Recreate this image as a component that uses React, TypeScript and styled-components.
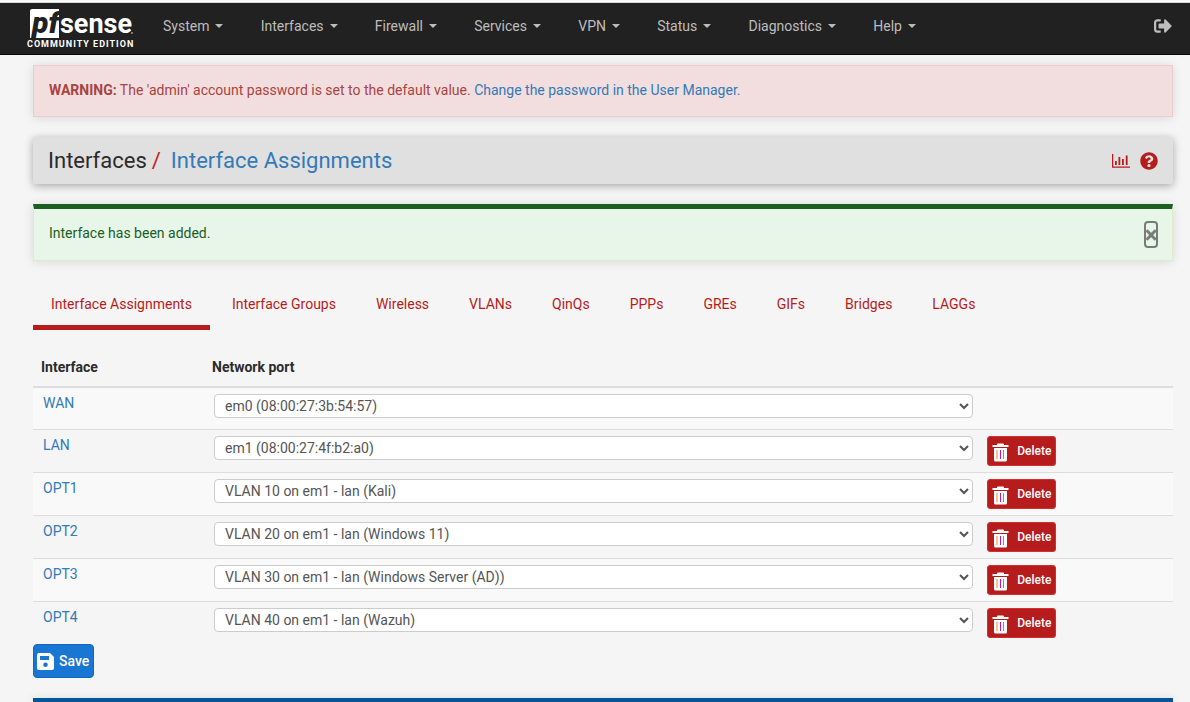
import React from "react";
import styled, { createGlobalStyle } from "styled-components";
import { FaQuestionCircle, FaSignOutAlt } from "react-icons/fa";

const GlobalStyle = createGlobalStyle`
  *, *::before, *::after { box-sizing: border-box; }
  body {
    margin: 0;
    background: #f5f5f5;
    color: #2b2b2b;
    font: 14px/20px Roboto, "Liberation Sans", sans-serif;
    overflow-x: hidden;
  }
  a { color: #337ab7; text-decoration: none; }
`;

const Page = styled.div`
  border-top: 2px solid #fafafa;
`;

const Navbar = styled.header`
  display: flex;
  align-items: center;
  height: 53px;
  padding: 0 18px 6px 27px;
  background: #212121;
  border-top: 1px solid #d8d8d8;
  border-bottom: 1px solid #080808;
`;

const Brand = styled.a`
  display: block;
  flex: none;
  width: 108px;
  height: 40px;
  margin-top: 5px;
  svg { display: block; overflow: visible; }
`;

const Menu = styled.nav`
  display: flex;
  flex: 1;
  justify-content: space-between;
  max-width: 781px;
  padding-left: 28px;
`;

const MenuItem = styled.button`
  display: flex;
  align-items: center;
  gap: 6px;
  padding: 0;
  border: 0;
  background: none;
  color: #bdbdbd;
  font: inherit;
  &::after {
    content: "";
    border: 4px solid transparent;
    border-top-color: currentColor;
    border-bottom: 0;
  }
`;

const Logout = styled.a`
  display: flex;
  margin-left: auto;
  color: #bdbdbd;
`;

const Content = styled.main`
  padding: 10px 17px 0 33px;
`;

const Alert = styled.div<{ $kind: "danger" | "success" }>`
  display: flex;
  justify-content: space-between;
  padding: 14px 14px 16px 15px;
  margin-bottom: 20px;
  box-shadow: 0 1px 10px rgba(0, 0, 0, 0.12);
  ${({ $kind }) =>
    $kind === "danger"
      ? "border: 1px solid #ebccd1; background: #f2dede; color: #a94442;"
      : "border: 1px solid #dcedc8; border-top: 5px solid #1b5e20; background: #e8f5e9; color: #1b5e20; padding-bottom: 17px;"}
`;

const CloseButton = styled.button`
  display: flex;
  align-items: center;
  justify-content: center;
  width: 14px;
  height: 27px;
  margin: -2px 0 -5px;
  padding: 0;
  border: 2px solid #757d76;
  border-radius: 4px;
  background: transparent;
  color: #757d76;
  font: bold 24px/24px Roboto, sans-serif;
`;

const TitleBar = styled.div`
  display: flex;
  align-items: center;
  justify-content: space-between;
  height: 47px;
  padding: 0 15px;
  margin-bottom: 20px;
  border-radius: 2px;
  background: #e0e0e0;
  box-shadow: 0 2px 8px rgba(0, 0, 0, 0.32);
`;

const Title = styled.h1`
  display: flex;
  gap: 5px;
  margin: 0;
  font-size: 22px;
  line-height: 28px;
  font-weight: 400;
  span { color: #c61a1a; }
  a { margin-left: 5px; }
`;

const TitleActions = styled.div`
  display: flex;
  align-items: center;
  gap: 10px;
  a { display: flex; color: #b71c1c; }
`;

const Tabs = styled.nav`
  display: flex;
  gap: 4px;
  margin-bottom: 20px;
`;

const Tab = styled.a<{ $active?: boolean }>`
  padding: 13px 18px 11px;
  color: #b71c1c;
  border-bottom: 5px solid ${({ $active }) => ($active ? "#b71c1c" : "transparent")};
`;

const Table = styled.table`
  width: 100%;
  table-layout: fixed;
  border-collapse: collapse;
  th {
    padding: 6px 8px 8px;
    text-align: left;
    font-weight: 700;
    height: 37px;
    border-bottom: 2px solid #ddd;
  }
  th:first-child { width: 15%; }
  th:nth-child(2) { width: 68%; }
  td {
    height: 43px;
    padding: 6px 6px 6px 10px;
    vertical-align: top;
    border-top: 1px solid #ddd;
  }
  td:first-child { padding-top: 5px; }
  tbody tr:first-child td { height: 42px; border-top: 0; }
  tbody tr:nth-child(odd) { background: #f9f9f9; }
`;

const PortSelect = styled.select`
  display: block;
  width: 100%;
  height: 24px;
  padding: 0 0 0 6px;
  border: 1px solid #ccc;
  border-radius: 4px;
  background: #fff;
  color: #555;
  font: inherit;
`;

const DeleteButton = styled.button`
  display: flex;
  align-items: center;
  gap: 8px;
  height: 30px;
  margin-left: -2px;
  padding: 0 4px;
  border: 1px solid #d32f2f;
  border-radius: 3px;
  background: #b71c1c;
  color: #fff;
  font: 500 12px/18px Roboto, sans-serif;
  svg { margin-top: 3px; }
`;

const SaveButton = styled.button`
  display: flex;
  align-items: center;
  gap: 5px;
  height: 34px;
  padding: 0 4px 0 3px;
  border: 1px solid #1565c0;
  border-radius: 4px;
  background: #1976d2;
  color: #fff;
  font: 500 14px/20px Roboto, sans-serif;
`;

const InfoPanel = styled.div`
  margin-top: 20px;
  border-top: 4px solid #01579b;
  box-shadow: 0 1px 10px rgba(0, 0, 0, 0.15);
`;

const Logo = () => (
  <svg width="108" height="40" viewBox="0 0 108 40" role="img" aria-label="pfSense Community Edition">
    <path d="M5 1H32V30H3V3Q3 1 5 1Z" fill="#fff" />
    <text x="5" y="25" fontFamily="Roboto, sans-serif" fontSize="30" fontWeight="900" fontStyle="italic" fill="#212121">pf</text>
    <text x="33" y="25" fontFamily="Roboto, sans-serif" fontSize="27" fontWeight="700" fill="#fff">sense</text>
    <circle cx="105" cy="25" r="1" fill="#999" />
    <text x="0" y="39" fontFamily="Roboto, sans-serif" fontSize="9" fontWeight="700" letterSpacing="1" fill="#fff">COMMUNITY EDITION</text>
  </svg>
);

const ChartIcon = () => (
  <svg width="18" height="14" viewBox="0 0 18 14" fill="currentColor" aria-hidden="true">
    <path d="M0 0h1.300v12.400h16.700v1.300H0zM3 7h1.800v4H3zM6.500 3h1.800v8H6.500zM10 5h1.800v6H10zM13.800 1.500h1.800v9.500h-1.800z" />
  </svg>
);

const TrashIcon = () => (
  <svg width="17" height="19" viewBox="0 0 17 19" aria-hidden="true">
    <path d="M5 1.500Q5 .5 6 .5h5q1 0 1 1V2h4.500v2H.5V2H5z" fill="#fff" />
    <path d="M2 5h13v12q0 1.500-1.500 1.500h-10Q2 18.500 2 17z" fill="#fff" />
    <path d="M4 7h2v9H4z" fill="#f6c48e" />
    <path d="M8 7h1v9H8z" fill="#c2189b" />
    <path d="M11 7h1v9h-1z" fill="#d9772f" />
  </svg>
);

const SaveIcon = () => (
  <svg width="17" height="17" viewBox="0 0 17 17" aria-hidden="true">
    <path fillRule="evenodd" fill="#fff" d="M2 0h11l4 4v11q0 2-2 2H2q-2 0-2-2V2Q0 0 2 0zM3 3v4h9V3zM8.500 9.500a2.300 2.300 0 1 0 0 4.600 2.300 2.300 0 0 0 0-4.600z" />
  </svg>
);

const menus = ["System", "Interfaces", "Firewall", "Services", "VPN", "Status", "Diagnostics", "Help"];
const tabs = ["Interface Assignments", "Interface Groups", "Wireless", "VLANs", "QinQs", "PPPs", "GREs", "GIFs", "Bridges", "LAGGs"];
const ports = [
  "em0 (08:00:27:3b:54:57)",
  "em1 (08:00:27:4f:b2:a0)",
  "VLAN 10 on em1 - lan (Kali)",
  "VLAN 20 on em1 - lan (Windows 11)",
  "VLAN 30 on em1 - lan (Windows Server (AD))",
  "VLAN 40 on em1 - lan (Wazuh)",
];
const interfaces = ["WAN", "LAN", "OPT1", "OPT2", "OPT3", "OPT4"];

export default function App() {
  return (
    <Page>
      <GlobalStyle />
      <Navbar>
        <Brand href="#"><Logo /></Brand>
        <Menu>
          {menus.map((m) => <MenuItem key={m} type="button">{m}</MenuItem>)}
        </Menu>
        <Logout href="#" aria-label="Logout"><FaSignOutAlt size={18} /></Logout>
      </Navbar>
      <Content>
        <Alert $kind="danger">
          <span>
            <strong>WARNING:</strong> The 'admin' account password is set to the default value.{" "}
            <a href="#">Change the password in the User Manager.</a>
          </span>
        </Alert>
        <TitleBar>
          <Title>Interfaces <span>/</span> <a href="#">Interface Assignments</a></Title>
          <TitleActions>
            <a href="#" aria-label="Status"><ChartIcon /></a>
            <a href="#" aria-label="Help"><FaQuestionCircle size={18} /></a>
          </TitleActions>
        </TitleBar>
        <Alert $kind="success">
          <span>Interface has been added.</span>
          <CloseButton type="button" aria-label="Close">×</CloseButton>
        </Alert>
        <Tabs>
          {tabs.map((t, i) => <Tab key={t} href="#" $active={i === 0}>{t}</Tab>)}
        </Tabs>
        <Table>
          <thead>
            <tr>
              <th scope="col">Interface</th>
              <th scope="col">Network port</th>
              <th scope="col" aria-label="Actions" />
            </tr>
          </thead>
          <tbody>
            {interfaces.map((name, i) => (
              <tr key={name}>
                <td><a href="#">{name}</a></td>
                <td>
                  <PortSelect aria-label={`${name} network port`} defaultValue={ports[i]}>
                    {ports.map((p) => <option key={p}>{p}</option>)}
                  </PortSelect>
                </td>
                <td>
                  {i > 0 && <DeleteButton type="button"><TrashIcon />Delete</DeleteButton>}
                </td>
              </tr>
            ))}
          </tbody>
        </Table>
        <SaveButton type="button"><SaveIcon />Save</SaveButton>
        <InfoPanel />
      </Content>
    </Page>
  );
}
